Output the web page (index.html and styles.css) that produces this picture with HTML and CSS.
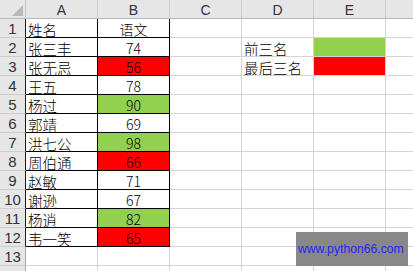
FILE: index.html
```html
<!DOCTYPE html>
<html lang="zh">
<head>
<meta charset="utf-8">
<link rel="stylesheet" href="styles.css">
</head>
<body>
<div class="sheet">
  <div class="grid">
    <div class="corner"><span class="tri"></span></div>
    <div class="ch">A</div><div class="ch">B</div><div class="ch">C</div><div class="ch">D</div><div class="ch">E</div><div class="ch last"></div>

    <div class="rh t">1</div><div class="c ta">姓名</div><div class="c tb">语文</div><div class="c"></div><div class="c"></div><div class="c"></div><div class="c last"></div>
    <div class="rh t">2</div><div class="c ta">张三丰</div><div class="c tb">74</div><div class="c"></div><div class="c txt">前三名</div><div class="c green"></div><div class="c last"></div>
    <div class="rh t">3</div><div class="c ta">张无忌</div><div class="c tb red">56</div><div class="c"></div><div class="c txt">最后三名</div><div class="c red"></div><div class="c last"></div>
    <div class="rh t">4</div><div class="c ta">王五</div><div class="c tb">78</div><div class="c"></div><div class="c"></div><div class="c"></div><div class="c last"></div>
    <div class="rh t">5</div><div class="c ta">杨过</div><div class="c tb green">90</div><div class="c"></div><div class="c"></div><div class="c"></div><div class="c last"></div>
    <div class="rh t">6</div><div class="c ta">郭靖</div><div class="c tb">69</div><div class="c"></div><div class="c"></div><div class="c"></div><div class="c last"></div>
    <div class="rh t">7</div><div class="c ta">洪七公</div><div class="c tb green">98</div><div class="c"></div><div class="c"></div><div class="c"></div><div class="c last"></div>
    <div class="rh t">8</div><div class="c ta">周伯通</div><div class="c tb red">66</div><div class="c"></div><div class="c"></div><div class="c"></div><div class="c last"></div>
    <div class="rh t">9</div><div class="c ta">赵敏</div><div class="c tb">71</div><div class="c"></div><div class="c"></div><div class="c"></div><div class="c last"></div>
    <div class="rh t">10</div><div class="c ta">谢逊</div><div class="c tb">67</div><div class="c"></div><div class="c"></div><div class="c"></div><div class="c last"></div>
    <div class="rh t">11</div><div class="c ta">杨逍</div><div class="c tb green">82</div><div class="c"></div><div class="c"></div><div class="c"></div><div class="c last"></div>
    <div class="rh t">12</div><div class="c ta">韦一笑</div><div class="c tb red">65</div><div class="c"></div><div class="c"></div><div class="c"></div><div class="c last"></div>
    <div class="rh">13</div><div class="c"></div><div class="c"></div><div class="c"></div><div class="c"></div><div class="c"></div><div class="c last"></div>
    <div class="rh"></div><div class="c"></div><div class="c"></div><div class="c"></div><div class="c"></div><div class="c"></div><div class="c last"></div>
  </div>
  <div class="watermark">www.python66.com</div>
</div>
</body>
</html>
```

FILE: styles.css
```css
html, body {
  margin: 0;
  padding: 0;
  background: #ffffff;
}
.sheet {
  position: relative;
  width: 413px;
  height: 271px;
  overflow: hidden;
}
.grid {
  display: grid;
  grid-template-columns: 26px 72px 72px 72px 72px 72px 28px;
  grid-template-rows: 19px repeat(13, 19px) 6px;
  font-family: "Noto Sans CJK SC", "Liberation Sans", sans-serif;
  color: #000;
}
.grid > div {
  box-sizing: border-box;
  border-right: 1px solid #d4d4d4;
  border-bottom: 1px solid #d4d4d4;
  overflow: hidden;
  white-space: nowrap;
}
.grid > .last {
  border-right: none;
}
.corner {
  position: relative;
  background: #e6e6e6;
  border-right-color: #c8c8c8 !important;
  border-bottom-color: #b8b8b8 !important;
}
.tri {
  position: absolute;
  right: 2px;
  bottom: 2px;
  width: 0;
  height: 0;
  border-left: 11px solid transparent;
  border-bottom: 11px solid #b9b9b9;
}
.ch {
  background: #e6e6e6;
  border-right-color: #cdcdcd !important;
  border-bottom-color: #b8b8b8 !important;
  font-family: "Liberation Sans", sans-serif;
  font-size: 14px;
  color: #333;
  display: flex;
  align-items: center;
  justify-content: center;
  padding-top: 1px;
}
.rh {
  background: #e6e6e6;
  border-right-color: #a8a8a8 !important;
  border-bottom-color: #cdcdcd !important;
  font-family: "Liberation Sans", sans-serif;
  font-size: 15px;
  color: #333;
  display: flex;
  align-items: center;
  justify-content: center;
  padding-top: 1px;
}
.rh.t {
  border-right-color: #1a1a1a !important;
}
.c {
  display: flex;
  align-items: center;
  font-size: 14.5px;
  font-weight: 300;
  padding-top: 2px;
}
.ta, .txt {
  padding-left: 2px;
}
.ta, .tb {
  border-right-color: #000 !important;
  border-bottom-color: #000 !important;
}
.tb {
  justify-content: center;
  font-size: 14px;
}
.green {
  background: #92d050;
}
.red {
  background: #ff0000;
}
.watermark {
  position: absolute;
  left: 296px;
  top: 232px;
  width: 112px;
  height: 34px;
  background: #888888;
  color: #2626f0;
  font-family: "Liberation Sans", sans-serif;
  font-size: 12.2px;
  display: flex;
  align-items: center;
  padding-left: 2px;
  box-sizing: border-box;
}
```
